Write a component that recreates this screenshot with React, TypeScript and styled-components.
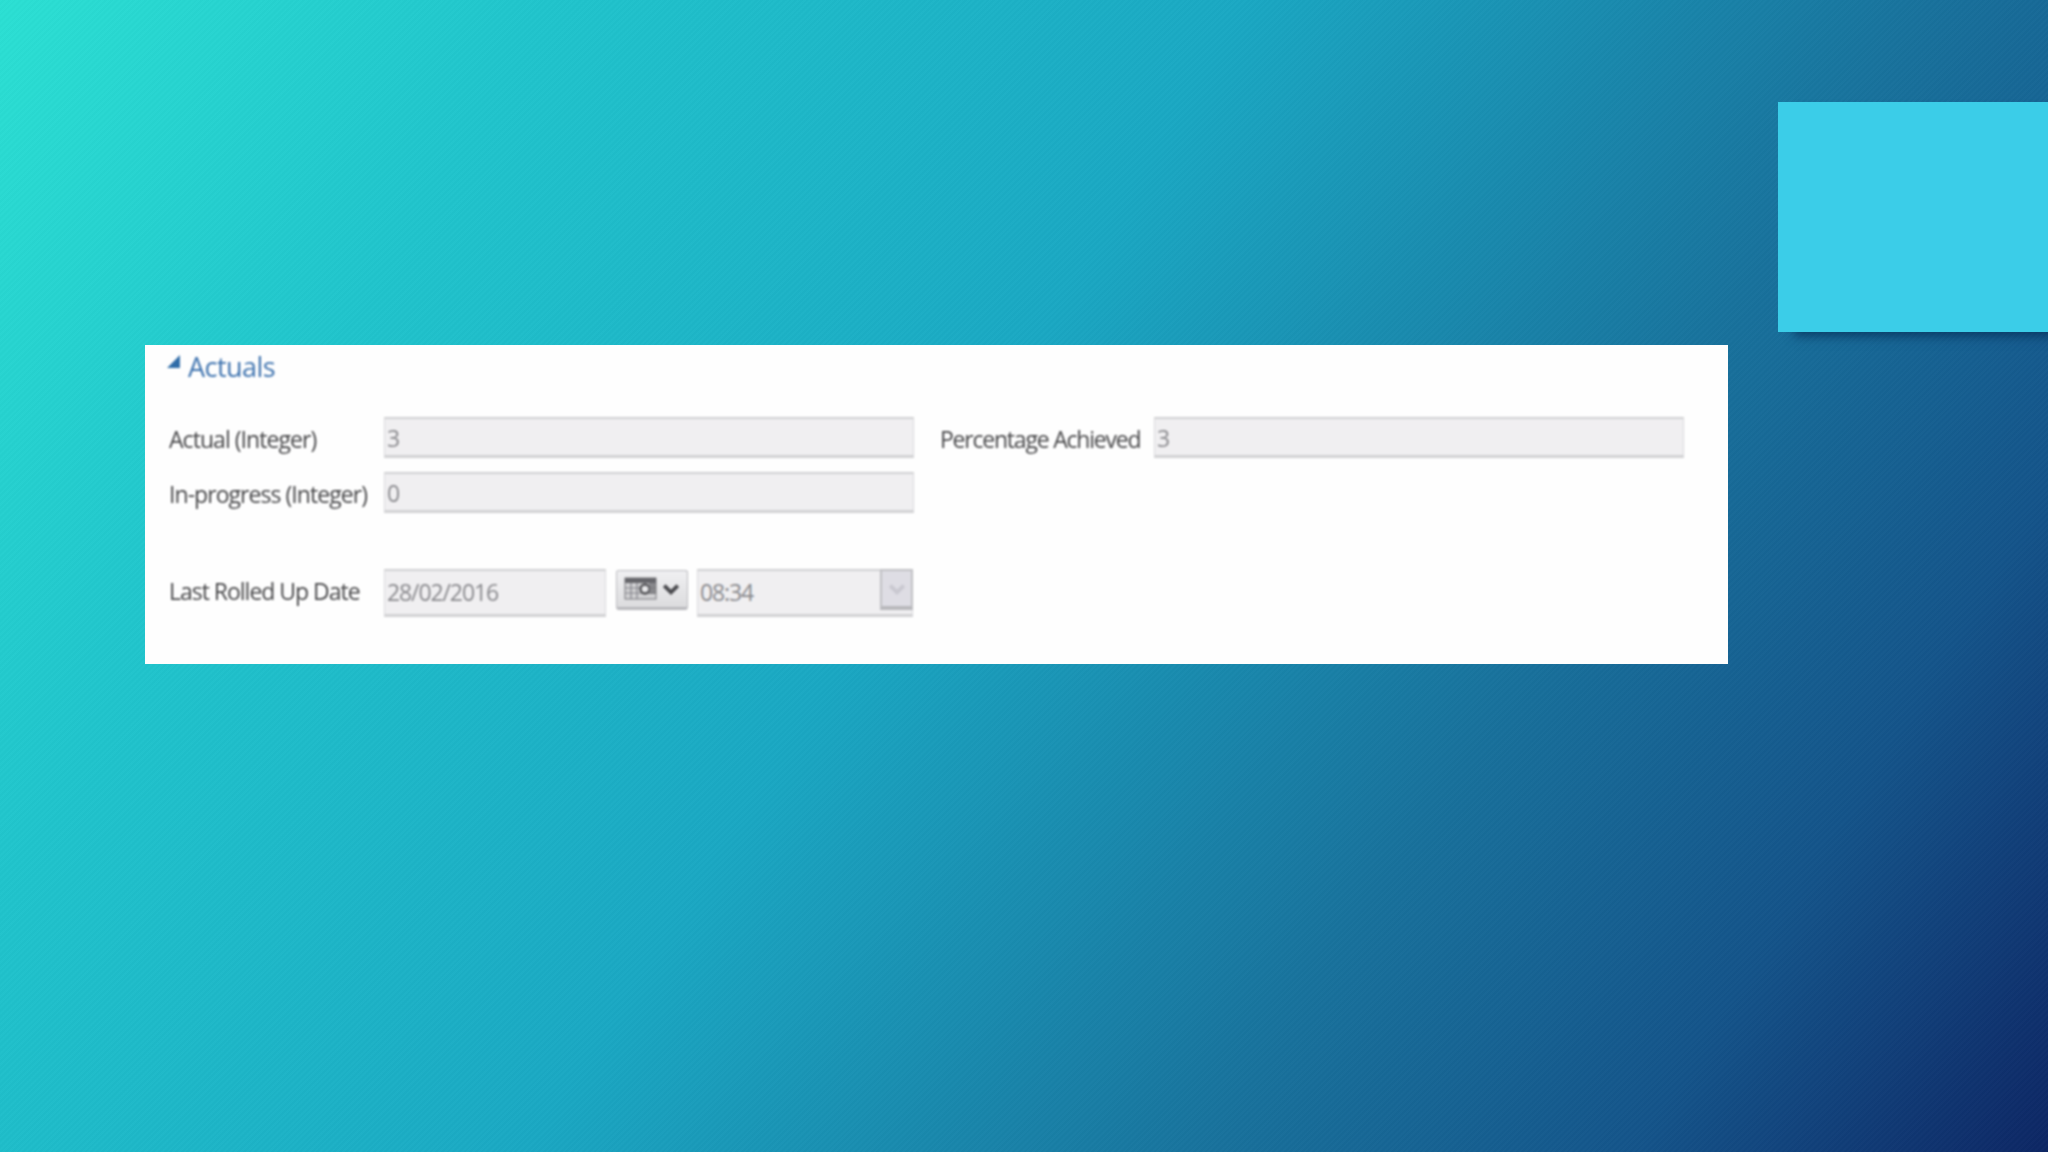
import React from "react";
import styled, { createGlobalStyle } from "styled-components";

const Global = createGlobalStyle`
  html, body { margin: 0; padding: 0; }
  body { width: 2048px; height: 1152px; overflow: hidden; font-family: "Open Sans", "Noto Sans", sans-serif; }
`;

const Stage = styled.div`
  width: 2048px;
  height: 1152px;
  box-sizing: border-box;
  padding: 102px 0 0 145px;
  display: flex;
  align-items: flex-start;
  background:
    repeating-linear-gradient(135deg, rgba(255,255,255,0.012) 0 2px, rgba(0,0,0,0.012) 2px 4px),
    linear-gradient(122deg, #2be0d3 0%, #20c4cc 20%, #1aa8c3 45%, #18719c 70%, #14548a 85%, #0d2664 100%);
`;

const Panel = styled.section`
  width: 1583px;
  height: 319px;
  margin-top: 243px;
  box-sizing: border-box;
  background: #fefefe;
  padding: 0 0 0 23px;
  display: flex;
  flex-direction: column;
`;

const Accent = styled.aside`
  width: 270px;
  height: 230px;
  margin-left: 50px;
  background: #3bcde8;
  box-shadow: 12px 8px 10px -4px rgba(5, 45, 85, 0.75);
`;

const Header = styled.header`
  display: flex;
  align-items: center;
  gap: 7px;
  height: 42px;
  margin-bottom: 2px;
  color: #3d72ae;
  font-size: 27px;
  letter-spacing: -0.55px;
  filter: blur(0.8px);
`;

const Caret = styled.svg`
  width: 15px;
  height: 15px;
  flex: none;
  margin: -10px 0 0 -2px;
`;

const Form = styled.div`
  margin-top: 28px;
  display: flex;
  flex-direction: column;
  filter: blur(0.8px);
`;

const Row = styled.div<{ $gap?: number }>`
  display: flex;
  align-items: center;
  margin-top: ${(p) => p.$gap ?? 0}px;
`;

const Label = styled.label<{ $w: number; $spacing?: number; $up?: boolean }>`
  width: ${(p) => p.$w}px;
  flex: none;
  font-size: 23px;
  letter-spacing: ${(p) => p.$spacing ?? -0.95}px;
  color: #454547;
  white-space: nowrap;
  padding: ${(p) => (p.$up ? "0 0 4px 1px" : "2px 0 0 1px")};
  box-sizing: border-box;
`;

const Field = styled.div<{ $w: number; $tall?: boolean }>`
  width: ${(p) => p.$w}px;
  height: ${(p) => (p.$tall ? 48 : 41)}px;
  box-sizing: border-box;
  flex: none;
  display: flex;
  align-items: center;
  justify-content: space-between;
  padding: ${(p) => (p.$tall ? "0 0 2px 2px" : "2px 0 0 2px")};
  background: #f0eff1;
  border: 1px solid #dadadc;
  border-top: 2px solid #d0d0d2;
  border-bottom: 3px solid #d2d2d4;
  color: #88888c;
  font-size: 23px;
  letter-spacing: -1.1px;
`;

const SideGap = styled.div<{ $w: number }>`
  width: ${(p) => p.$w}px;
  flex: none;
`;

const CalendarButton = styled.div`
  width: 72px;
  height: 40px;
  margin: -6px 9px 0 10px;
  box-sizing: border-box;
  flex: none;
  display: flex;
  align-items: center;
  justify-content: center;
  gap: 4px;
  background: linear-gradient(#f0f0f2, #dcdcde);
  border: 1px solid #bcbcc0;
  border-bottom: 3px solid #b8b8bc;
  border-radius: 3px;
`;

const DropButton = styled.div`
  width: 33px;
  height: 41px;
  margin: -4px -1px 0 0;
  box-sizing: border-box;
  display: flex;
  align-items: center;
  justify-content: center;
  background: #dedde4;
  border: 2px solid #c0c0c4;
  border-bottom: 4px solid #b8b8bc;
  flex: none;
`;

const Chevron = ({ color, size }: { color: string; size: number }) => (
  <svg width={size} height={size} viewBox="0 0 16 16">
    <path d="M2 5 L8 11 L14 5" fill="none" stroke={color} strokeWidth="3.4" />
  </svg>
);

const CalendarIcon = () => (
  <svg width="34" height="24" viewBox="0 0 34 24">
    <rect x="1" y="1" width="31" height="21" fill="#d2d2d4" stroke="#77777b" />
    <rect x="1" y="1" width="31" height="5" fill="#66666b" />
    <path d="M7 6v16M13 6v16M1 11h31M1 16h31" stroke="#84848a" strokeWidth="1.2" />
    <circle cx="21" cy="12" r="4.5" fill="#e8e8ea" stroke="#505054" strokeWidth="2.4" />
    <rect x="25" y="6" width="7" height="11" fill="#77777b" opacity=".8" />
  </svg>
);

export default function App() {
  return (
    <Stage>
      <Global />
      <Panel>
        <Header>
          <Caret viewBox="0 0 14 14">
            <path d="M13 1 V13 H1 Z" fill="#2f6ca8" />
          </Caret>
          Actuals
        </Header>
        <Form>
          <Row>
            <Label $w={216}>Actual (Integer)</Label>
            <Field $w={530}>3</Field>
            <SideGap $w={25} />
            <Label $w={215} $spacing={-1.22}>Percentage Achieved</Label>
            <Field $w={530}>3</Field>
          </Row>
          <Row $gap={14}>
            <Label $w={216}>In-progress (Integer)</Label>
            <Field $w={530}>0</Field>
          </Row>
          <Row $gap={56}>
            <Label $w={216} $up $spacing={-1.02}>Last Rolled Up Date</Label>
            <Field $w={222} $tall>28/02/2016</Field>
            <CalendarButton>
              <CalendarIcon />
              <Chevron color="#4a4a4e" size={18} />
            </CalendarButton>
            <Field $w={216} $tall>
              08:34
              <DropButton>
                <Chevron color="#c9c8d0" size={18} />
              </DropButton>
            </Field>
          </Row>
        </Form>
      </Panel>
      <Accent />
    </Stage>
  );
}
